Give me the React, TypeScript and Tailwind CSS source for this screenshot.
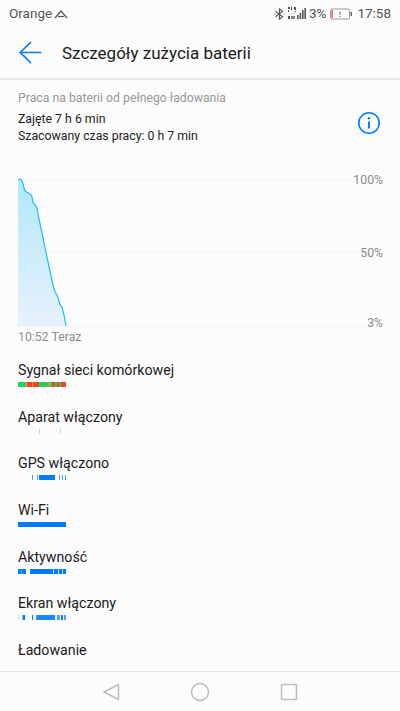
import { ArrowLeft } from 'lucide-react';

type Segment = [number, number, string];

const BLUE = '#007dff';
const MID = '#4a9fff';
const FAINT = '#bcdcff';
const GREEN = '#1ad45f';
const RED = '#f8402c';
const ORANGE = '#f5a623';

const rows: { label: string; segments: Segment[] }[] = [
  {
    label: 'Sygnał sieci komórkowej',
    segments: [
      [0, 8, GREEN],
      [8, 1, ORANGE],
      [9, 5, RED],
      [14, 1, ORANGE],
      [15, 6, RED],
      [21, 5, GREEN],
      [26, 5, '#4fc04f'],
      [31, 1, ORANGE],
      [32, 2, GREEN],
      [34, 3, RED],
      [37, 2, GREEN],
      [39, 2, RED],
      [41, 2, GREEN],
      [43, 5, RED],
    ],
  },
  {
    label: 'Aparat włączony',
    segments: [
      [21, 1, FAINT],
      [42, 1, FAINT],
    ],
  },
  {
    label: 'GPS włączono',
    segments: [
      [14, 1, MID],
      [19, 1, MID],
      [21, 16, BLUE],
      [41, 1, MID],
      [44, 1, MID],
      [47, 1, MID],
    ],
  },
  { label: 'Wi-Fi', segments: [[0, 48, BLUE]] },
  {
    label: 'Aktywność',
    segments: [
      [0, 3, BLUE],
      [3, 1, MID],
      [4, 4, BLUE],
      [12, 23, BLUE],
      [35, 1, FAINT],
      [36, 4, BLUE],
      [40, 1, FAINT],
      [41, 3, BLUE],
      [44, 1, FAINT],
      [45, 3, BLUE],
    ],
  },
  {
    label: 'Ekran włączony',
    segments: [
      [0, 1, FAINT],
      [4, 1, '#8fc4ff'],
      [5, 2, BLUE],
      [14, 1, BLUE],
      [18, 1, MID],
      [19, 18, '#1a89ff'],
      [39, 3, MID],
      [43, 2, BLUE],
      [46, 2, MID],
    ],
  },
  { label: 'Ładowanie', segments: [] },
];

// battery curve, relative to the top left of the drawing area
const curve =
  '0,0 3,0.5 4,2 5,5 6,9 7,12 10,14 13,16 14,18 15,23 17,26 19,29 21,40 24,54 27,69 30,83 33,97 35,106 37,113 39,116 41,122 42,126 44,128 46,136 48,147';

const Chart = () => (
  <svg width="400" height="157" viewBox="0 0 400 157" className="block">
    <defs>
      <linearGradient id="fill" x1="0" y1="0" x2="0" y2="1">
        <stop offset="0" stopColor="#b2e7f8" />
        <stop offset="1" stopColor="#e6f2fd" />
      </linearGradient>
    </defs>
    <g fill="none" stroke="#f3f3f3">
      <line x1="18" y1="9.5" x2="352" y2="9.5" />
      <line x1="18" y1="82.5" x2="358" y2="82.5" />
      <line x1="18" y1="156.5" x2="366" y2="156.5" />
    </g>
    <g transform="translate(18 9)">
      <polygon points={`${curve} 0,147`} fill="url(#fill)" />
      <polyline points={curve} fill="none" stroke="#1cc0f0" strokeWidth="1.2" />
    </g>
  </svg>
);

const StatusIcons = () => (
  <div className="flex items-center">
    <svg width="11" height="12" viewBox="0 0 11 12" fill="none" stroke="#555" strokeWidth="1.1" className="mr-[3px]">
      <path d="M1.5 3.2 8.5 8.8 5.5 11.2V.8L8.5 3.2 1.5 8.8" />
      <circle cx="1" cy="6" r=".5" fill="#555" stroke="none" />
      <circle cx="10" cy="6" r=".5" fill="#555" stroke="none" />
    </svg>
    <svg width="20" height="13" viewBox="0 0 20 13" fill="#555" className="mr-[1px]">
      <rect x="0" y="0" width="2" height="2" />
      <rect x="3" y="0" width="1" height="3" />
      <rect x="6" y="0" width="2" height="3" />
      <rect x="0" y="3" width="1" height="2" />
      <rect x="7" y="4" width="1" height="1" />
      <rect x="0" y="9" width="2" height="3" />
      <rect x="3" y="9" width="4" height="3" opacity=".7" />
      <rect x="9" y="8" width="1.6" height="4" />
      <rect x="11.6" y="6" width="1.6" height="6" />
      <rect x="14" y="3" width="1.6" height="9" />
      <rect x="16.4" y="1" width="1.6" height="11" />
    </svg>
    <span className="text-[13.5px] text-[#555]">3%</span>
    <svg width="22" height="12" viewBox="0 0 22 12" className="ml-1">
      <rect x=".5" y="1" width="19" height="10" rx="1.5" fill="none" stroke="#999" />
      <rect x="1.5" y="2" width="1.2" height="8" fill="#e8362c" />
      <rect x="9.5" y="3.5" width="1" height="3.5" fill="#666" />
      <rect x="9.5" y="8" width="1" height="1" fill="#666" />
      <rect x="20.5" y="4" width="1.5" height="4" fill="#666" />
    </svg>
    <span className="ml-[5px] text-[13.5px] text-[#555]">17:58</span>
  </div>
);

const App = () => {
  return (
    <div className="flex h-[711px] w-[400px] flex-col overflow-hidden bg-[#fcfcfc] font-['Roboto',sans-serif]">
      <div className="flex h-[27px] shrink-0 items-center justify-between px-[9px]">
        <div className="flex items-center gap-[2px] text-[13.5px] text-[#555]">
          Orange
          <svg width="15" height="10" viewBox="0 0 15 10" fill="none" stroke="#555" strokeWidth="1.2">
            <path d="M1 9 7 2 13 9" />
            <path d="M4 7.5h6" />
          </svg>
        </div>
        <StatusIcons />
      </div>

      <div className="flex h-[53px] shrink-0 items-center border-b-2 border-[#e8e8e8] pl-[13px]">
        <ArrowLeft size={35} color="#007dff" strokeWidth={1.15} />
        <span className="ml-[14px] mt-[2px] text-[17px] text-[#1a1a1a]">Szczegóły zużycia baterii</span>
      </div>

      <div className="relative flex-1 overflow-hidden">
        <div className="pl-[18px] pt-[10px]">
          <p className="text-[12.25px] leading-[16px] text-[#999]">Praca na baterii od pełnego ładowania</p>
          <p className="mt-[5px] text-[12.3px] leading-[16.5px] text-[#222]">Zajęte 7 h 6 min</p>
          <p className="text-[12.3px] leading-[16.5px] text-[#222]">Szacowany czas pracy: 0 h 7 min</p>
        </div>

        <svg width="24" height="24" viewBox="0 0 24 24" fill="none" className="absolute right-[19px] top-[31px]">
          <circle cx="12" cy="12" r="10.2" stroke="#007dff" strokeWidth="1.6" />
          <circle cx="12" cy="7.3" r="1.2" fill="#007dff" />
          <path d="M12 10.5v7" stroke="#007dff" strokeWidth="2" />
        </svg>

        <div className="relative mt-[26px]">
          <Chart />
          <span className="absolute right-[17px] top-[2px] text-[12.25px] leading-[16px] text-[#8c8c8c]">100%</span>
          <span className="absolute right-[17px] top-[75px] text-[12.25px] leading-[16px] text-[#8c8c8c]">50%</span>
          <span className="absolute right-[17px] top-[145px] text-[12.25px] leading-[16px] text-[#8c8c8c]">3%</span>
        </div>

        <div className="mt-[2px] flex gap-[3px] pl-[18px] text-[12.25px] leading-[16px] text-[#8c8c8c]">
          <span>10:52</span>
          <span>Teraz</span>
        </div>

        <div className="mt-[15px] pl-[18px]">
          {rows.map((row) => (
            <div key={row.label} className="h-[46.7px]">
              <p className="text-[14.2px] leading-[20px] text-[#1a1a1a]">{row.label}</p>
              <div className="relative mt-[2px] h-[5px] w-[48px]">
                {row.segments.map(([left, width, color], i) => (
                  <span
                    key={i}
                    className="absolute bottom-0 top-0"
                    style={{ left, width, backgroundColor: color }}
                  />
                ))}
              </div>
            </div>
          ))}
        </div>
      </div>

      <div className="flex h-[40px] shrink-0 items-center justify-center gap-[70px] border-t border-[#e6e6e6] bg-[#fcfcfc]">
        <svg width="18" height="18" viewBox="0 0 18 18" fill="none" stroke="#bbb" strokeWidth="1.5" strokeLinejoin="round">
          <path d="M16.5 1.5v15L2 9z" />
        </svg>
        <svg width="20" height="20" viewBox="0 0 20 20" fill="none" stroke="#bbb" strokeWidth="1.5">
          <circle cx="10" cy="10" r="8.5" />
        </svg>
        <svg width="18" height="18" viewBox="0 0 18 18" fill="none" stroke="#bbb" strokeWidth="1.5" strokeLinejoin="round">
          <rect x="1.5" y="1.5" width="15" height="15" rx="1" />
        </svg>
      </div>
    </div>
  );
};

export default App;
